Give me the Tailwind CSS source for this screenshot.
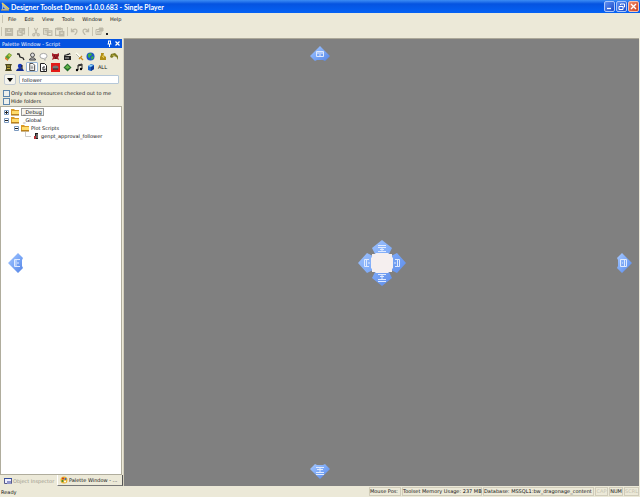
<!DOCTYPE html>
<html lang="en">
<head>
<meta charset="utf-8">
<title>Designer Toolset Demo</title>
<script src="https://cdn.jsdelivr.net/npm/@tailwindcss/browser@4"></script>
</head>
<body class="relative flex h-screen flex-col overflow-hidden bg-[#ece9d8] font-['DejaVu_Sans',Tahoma,sans-serif] text-[5px] leading-[8px] text-[#111]">
<svg class="absolute size-0" aria-hidden="true">
  <defs>
    <linearGradient id="blue" x1="0" y1="0" x2="1" y2="1"><stop offset="0" stop-color="#a9caff"/><stop offset=".5" stop-color="#7ba8f7"/><stop offset="1" stop-color="#5583e4"/></linearGradient>
    <symbol id="folder" viewBox="0 0 8 8"><path d="M0 1h3l1 1h4v5H0z" fill="#d99a25"/><path d="M1 3h7v3H1z" fill="#ffdc6b"/><path d="M0 7h8" stroke="#9a6a14"/></symbol>
    <symbol id="minus" viewBox="0 0 5 5"><path d="M.5.5h4v4h-4z" fill="#fff" stroke="#7b9ac0"/><path d="M1 2.500h3" stroke="#222"/></symbol>
    <symbol id="plus" viewBox="0 0 5 5"><path d="M.5.5h4v4h-4z" fill="#fff" stroke="#7b9ac0"/><path d="M1 2.500h3M2.500 1v3" stroke="#222"/></symbol>
  </defs>
</svg>

<header class="flex h-[13px] shrink-0 items-center bg-linear-to-b from-[#3c8cf4] via-[#0553e0] via-30% to-[#0562f5] px-px">
  <svg class="size-[9px]" viewBox="0 0 9 9"><path d="M1 1v7h7z" fill="#9ab4d0"/><path d="M1 1l7 6" stroke="#f3d24e" stroke-width="1.500"/><path d="M0 8h8" stroke="#e9b33c"/><path d="M2 5v2h2z" fill="#1b4fb0"/></svg>
  <h1 class="ml-px flex-1 whitespace-nowrap font-['Lato',sans-serif] text-[7px] font-bold text-white">Designer Toolset Demo v1.0.0.683 - Single Player</h1>
  <div class="flex gap-px">
    <button aria-label="Minimize" class="size-[11px] rounded-[2px] border border-[#a9c5fa] bg-linear-to-br from-[#5f8ff2] to-[#1c49c8]"><svg viewBox="0 0 9 9"><path d="M2 6.500h4" stroke="#fff" stroke-width="1.300"/></svg></button>
    <button aria-label="Restore" class="size-[11px] rounded-[2px] border border-[#a9c5fa] bg-linear-to-br from-[#5f8ff2] to-[#1c49c8]"><svg viewBox="0 0 9 9" fill="none" stroke="#fff"><path d="M3.500 3V2H7.500v3H6.500M2 4.500h4v3H2z"/></svg></button>
    <button aria-label="Close" class="size-[11px] rounded-[2px] border border-[#f5c1b0] bg-linear-to-br from-[#ee8a6a] to-[#d0401c]"><svg viewBox="0 0 9 9"><path d="M2 2l5 5M7 2l-5 5" stroke="#fff" stroke-width="1.400"/></svg></button>
  </div>
</header>

<nav class="flex h-[12px] shrink-0 items-center gap-[8px] pl-[2px]">
  <span class="-mr-[3px] h-[8px] w-px bg-[#c9c5b2]"></span>
  <button>File</button><button>Edit</button><button>View</button><button>Tools</button><button>Window</button><button>Help</button>
</nav>

<div class="flex h-[13px] shrink-0 items-center gap-[2px] pl-px text-[#bdb9a8]" role="toolbar">
  <span class="h-[9px] w-px bg-[#c9c5b2]"></span>
  <button aria-label="Save"><svg class="size-[10px]" viewBox="0 0 9 9" fill="none" stroke="currentColor"><path d="M1.500 1.500h6v6h-6zM3 2v2h3V2M3 7V6h3v1" stroke-width="1.400"/></svg></button>
  <button aria-label="Save all"><svg class="size-[10px]" viewBox="0 0 9 9" fill="none" stroke="currentColor"><path d="M1.500 3.500h4v4h-4zM3 3V1.500h4.500V6H6M3 5h2M5 3h2" stroke-width="1.300"/></svg></button>
  <span class="h-[9px] w-px bg-[#c9c5b2]"></span>
  <button aria-label="Cut"><svg class="size-[10px]" viewBox="0 0 9 9" fill="none" stroke="currentColor"><path d="M3 1l2.500 5M6 1L3.500 6"/><circle cx="2.500" cy="7" r="1"/><circle cx="6.500" cy="7" r="1"/></svg></button>
  <button aria-label="Copy"><svg class="size-[10px]" viewBox="0 0 9 9" fill="none" stroke="currentColor"><path d="M.5 1.500h4v5h-4zM4 3.500h4v4H4zM5 5h2M1.500 3h2M1.500 4.500h2"/></svg></button>
  <button aria-label="Paste"><svg class="size-[10px]" viewBox="0 0 9 9" fill="none" stroke="currentColor"><path d="M.5 1.500h6v6h-6z"/><path d="M2 1h3v1.500H2zM4 4h4v4H4z" fill="currentColor"/><path d="M5 5.500h2" stroke="#ece9d8"/></svg></button>
  <span class="h-[9px] w-px bg-[#c9c5b2]"></span>
  <button aria-label="Undo"><svg class="size-[9px]" viewBox="0 0 9 9" fill="none" stroke="currentColor"><path d="M1.500 1.500v3h3M2 4c2-3 5-2 5 0S5 7 5 8" stroke-width="1.300"/></svg></button>
  <button aria-label="Redo"><svg class="size-[9px]" viewBox="0 0 9 9" fill="none" stroke="currentColor"><path d="M7.500 1.500v3h-3M7 4C5 1 2 2 2 4s2 3 2 4" stroke-width="1.300"/></svg></button>
  <span class="h-[9px] w-px bg-[#c9c5b2]"></span>
  <button aria-label="Properties"><svg class="size-[9px]" viewBox="0 0 9 9" fill="none" stroke="currentColor"><path d="M1 2.500h5v5H1zM2 4.500h3M2 6h3"/><path d="M4 1h4v3H5z" fill="currentColor"/></svg></button>
  <span class="mt-[5px] size-[2px] bg-[#222]"></span>
</div>

<div class="flex min-h-0 flex-1">
  <aside class="flex w-[124px] shrink-0 flex-col border-r border-[#d4d0be]">
    <div class="mr-px mt-px flex h-[9px] shrink-0 items-center bg-[#0553e0] pl-[2px] text-white">
      <h2 class="flex-1">Palette Window - Script</h2>
      <button aria-label="Pin"><svg class="size-[7px]" viewBox="0 0 7 7" fill="none" stroke="#fff"><path d="M2.500 1v3M4.500 1v3M2 1h3M1.500 4h4M3.500 4v3"/></svg></button>
      <button aria-label="Close panel" class="mx-px"><svg class="size-[7px]" viewBox="0 0 7 7"><path d="M1.500 1.500l4 4M5.500 1.500l-4 4" stroke="#fff" stroke-width="1.200"/></svg></button>
    </div>

    <div class="mt-[3px] grid shrink-0 grid-cols-10 gap-y-px px-[3px]">
      <button aria-label="Areas" class="grid h-[10px] place-items-center"><svg class="size-[9px]" viewBox="0 0 9 9"><path d="M1 5l4-4 3 2-4 5z" fill="#5b9b33"/><path d="M1 5l3 2v2L1 7z" fill="#e07c28"/><path d="M4 3l2-1 1 2-2 1z" fill="#c9c840"/></svg></button>
      <button aria-label="Conversations" class="grid h-[10px] place-items-center"><svg class="size-[9px]" viewBox="0 0 9 9"><path d="M1 2h2l1 3 3 1 1 2" fill="none" stroke="#222" stroke-width="1.300"/></svg></button>
      <button aria-label="Characters" class="grid h-[10px] place-items-center"><svg class="size-[9px]" viewBox="0 0 9 9"><circle cx="4.500" cy="3" r="2" fill="#ddd" stroke="#555"/><path d="M1.500 8c0-3 6-3 6 0z" fill="#aaa" stroke="#444"/></svg></button>
      <button aria-label="Dialogue" class="grid h-[10px] place-items-center"><svg class="size-[9px]" viewBox="0 0 9 9"><ellipse cx="4.500" cy="4" rx="3.600" ry="2.600" fill="#fff" stroke="#a9a9a9"/><path d="M5 6.500l1 2 .5-2" fill="#fff" stroke="#999" stroke-width=".6"/></svg></button>
      <button aria-label="Creatures" class="grid h-[10px] place-items-center"><svg class="size-[9px]" viewBox="0 0 9 9"><path d="M1 1l2 1h3l2-1v3L7 5l1 3-2-1H3L1 8l1-3-1-1z" fill="#a4202a"/><path d="M3 4h1M5.500 4h1M4 6h1.500" stroke="#4a0508"/></svg></button>
      <button aria-label="Cutscenes" class="grid h-[10px] place-items-center"><svg class="size-[9px]" viewBox="0 0 9 9"><path d="M1 4h7v4H1zM1 3l6-2 .5 1.500L1.500 4z" fill="#222"/><path d="M3 2.500l1 1M5.500 1.500l1 1M2 6h4" stroke="#ddd" stroke-width=".8"/></svg></button>
      <button aria-label="Items" class="grid h-[10px] place-items-center"><svg class="size-[9px]" viewBox="0 0 9 9"><path d="M1 1l5 5" stroke="#fffdf0" stroke-width="2"/><path d="M1 2l4 4" stroke="#8c8c80" stroke-width=".6"/><path d="M4 7l3-3M6 6l2 2" stroke="#c98b1b" stroke-width="1.300"/></svg></button>
      <button aria-label="Maps" class="grid h-[10px] place-items-center"><svg class="size-[9px]" viewBox="0 0 9 9"><circle cx="4.500" cy="4.500" r="4" fill="#1d56c7"/><path d="M2 2l3-1 1 2-2 1v2L2 5zM6 4l2 1-2 3-1-2z" fill="#3bb044"/></svg></button>
      <button aria-label="Merchants" class="grid h-[10px] place-items-center"><svg class="size-[9px]" viewBox="0 0 9 9"><path d="M3 1h3L5.500 3 8 5v3H2V5l1-2z" fill="#b18e16"/><path d="M4 4l2 2M5 3l1 2" stroke="#f0d459" stroke-width=".8"/></svg></button>
      <button aria-label="Placeables" class="grid h-[10px] place-items-center"><svg class="size-[9px]" viewBox="0 0 9 9"><path d="M0 5l1-3 4-1 3 3v4L6.500 5 4 4 2 6z" fill="#7d7a22"/><path d="M2 3l3 1" stroke="#c6bb4a" stroke-width=".8"/></svg></button>
      <button aria-label="Plots" class="grid h-[10px] place-items-center"><svg class="size-[9px]" viewBox="0 0 9 9"><path d="M1 1h7L7 3v3l1 2H1l1-2V3z" fill="#4a471d"/><path d="M3 3h3M3 5.500h3" stroke="#c6ae3e"/></svg></button>
      <button aria-label="Players" class="grid h-[10px] place-items-center"><svg class="size-[9px]" viewBox="0 0 9 9"><circle cx="4" cy="3" r="2.200" fill="#1535ba"/><path d="M0 8c1-4 7-4 8 0z" fill="#132c91"/><path d="M6 2v4" stroke="#111"/></svg></button>
      <button aria-label="Scripts" class="grid h-[10px] place-items-center rounded-[1px] border border-[#98b5d6] bg-white"><svg class="size-[8px]" viewBox="0 0 9 9"><path d="M2 .5h3.500l2 2v6H2z" fill="#fff" stroke="#333"/><path d="M3 3.500h3M3 5h3M3 6.500h3" stroke="#777" stroke-width=".8"/></svg></button>
      <button aria-label="Script plots" class="grid h-[10px] place-items-center"><svg class="size-[9px]" viewBox="0 0 9 9"><path d="M1.500.5h4l2 2v6h-6z" fill="#fff" stroke="#222"/><path d="M6 4H4v3h2V5.500" fill="none" stroke="#222"/></svg></button>
      <button aria-label="Stages" class="grid h-[10px] place-items-center"><svg class="size-[9px]" viewBox="0 0 9 9"><path d="M0 0h9v9H0z" fill="#e31b18"/><ellipse cx="4.500" cy="4.500" rx="3" ry="2" fill="#777"/><path d="M2 6h5" stroke="#222"/></svg></button>
      <button aria-label="Triggers" class="grid h-[10px] place-items-center"><svg class="size-[9px]" viewBox="0 0 9 9"><path d="M4.500.5l4 4-4 4-4-4z" fill="#246e2b"/><path d="M4.500 2l2.500 2.500L4.500 6 2 4.500z" fill="#62b548"/></svg></button>
      <button aria-label="Sounds" class="grid h-[10px] place-items-center"><svg class="size-[9px]" viewBox="0 0 9 9"><path d="M3 7V2l4-1v5M3 3l4-1" fill="none" stroke="#222"/><circle cx="2" cy="7" r="1.200"/><circle cx="6" cy="6" r="1.200"/></svg></button>
      <button aria-label="Models" class="grid h-[10px] place-items-center"><svg class="size-[9px]" viewBox="0 0 9 9"><path d="M2 3l3-2 3 1v4L5 8 2 7z" fill="#1b63c7"/><path d="M2 3l3-1.500 2 1L5 4z" fill="#8fd2fa"/><path d="M5 4v4l3-2V3z" fill="#123a90"/></svg></button>
      <button class="grid h-[10px] place-items-center">ALL</button>
    </div>

    <div class="mt-[2px] flex shrink-0 items-center gap-[3px] px-[4px]">
      <button aria-label="Filter options" class="grid h-[11px] w-[12px] place-items-center rounded-[2px] border border-[#c4cbd2] bg-[#f6f5ee]"><svg class="h-[4px] w-[6px]" viewBox="0 0 6 4"><path d="M0 0h6L3 4z"/></svg></button>
      <input aria-label="Filter" value="follower" class="h-[9px] min-w-0 flex-1 rounded-[1px] border border-[#b6c8d8] bg-white px-[2px]">
    </div>

    <label class="mt-[4px] flex h-[8px] shrink-0 items-center gap-px pl-[3px] whitespace-nowrap"><input type="checkbox" class="size-[7px] appearance-none border border-[#5d86ad] bg-[#eef0ec]">Only show resources checked out to me</label>
    <label class="flex h-[8px] shrink-0 items-center gap-px pl-[3px]"><input type="checkbox" class="size-[7px] appearance-none border border-[#5d86ad] bg-[#eef0ec]">Hide folders</label>

    <ul class="mr-px mt-px min-h-0 flex-1 border border-[#b0ad9d] bg-white pl-[3px] pt-px">
      <li class="flex h-[8px] items-center gap-[2px]"><svg class="size-[5px]"><use href="#plus"/></svg><svg class="size-[8px]"><use href="#folder"/></svg><span class="border border-[#999] bg-[#f6f5f0] px-px leading-[6px]">_Debug</span></li>
      <li class="flex h-[8px] items-center gap-[2px]"><svg class="size-[5px]"><use href="#minus"/></svg><svg class="size-[8px]"><use href="#folder"/></svg><span class="pl-[2px]">_Global</span></li>
      <li class="flex h-[8px] items-center gap-[2px] pl-[10px]"><svg class="size-[5px]"><use href="#minus"/></svg><svg class="size-[8px]"><use href="#folder"/></svg><span>Plot Scripts</span></li>
      <li class="flex h-[8px] items-center gap-[2px] pl-[21px]"><svg class="h-[8px] w-[6px]" viewBox="0 0 6 8"><path d="M.5 0v4.500H6" fill="none" stroke="#ccc"/></svg><svg class="h-[8px] w-[6px]" viewBox="0 0 6 8"><path d="M2 1h3v6H2z" fill="#222"/><path d="M1 4h2v3H1z" fill="#b62e35"/><path d="M4 2v4" stroke="#aaa"/></svg><span>genpt_approval_follower</span></li>
    </ul>

    <div class="flex h-[11px] shrink-0 pl-[4px]" role="tablist">
      <button role="tab" class="flex w-[53px] items-center gap-px whitespace-nowrap text-[#98968b]"><svg class="size-[8px]" viewBox="0 0 8 8"><path d="M.5 1.500h7v5h-7z" fill="#eef" stroke="#555a8d"/><path d="M0 1.500h8" stroke="#344e9e"/><path d="M3 4h4v3H3z" fill="#8f94ca"/></svg>Object Inspector</button>
      <button role="tab" aria-selected="true" class="flex flex-1 items-center gap-px whitespace-nowrap border-x border-b border-l-white border-r-[#555] border-b-[#777] pl-[2px]"><svg class="size-[8px]" viewBox="0 0 8 8"><circle cx="4" cy="4" r="3.500" fill="#ecb332"/><circle cx="3" cy="2.500" r="1" fill="#c52f24"/><circle cx="5.500" cy="3" r="1" fill="#2f63c2"/><circle cx="5" cy="5.500" r="1" fill="#fff"/><circle cx="2.500" cy="5" r="1" fill="#388b36"/></svg>Palette Window - ...</button>
    </div>
  </aside>

  <main class="relative mr-px flex-1 border-t border-[#aca899] bg-[#808080]">
    <svg class="absolute left-1/2 top-1/2 size-[48px] -translate-x-1/2 -translate-y-1/2" viewBox="0 0 48 48" role="img" aria-label="Dock guide">
      <path d="M24 1l10 8-3 6 2 2 6-3 9 10-9 10-6-3-2 2 3 6-10 8-10-8 3-6-2-2-6 3L0 24l9-10 6 3 2-2-3-6z" fill="url(#blue)"/>
      <path d="M14 15h3l1-1h12l1 1h3v3l1 1v10l-1 1v3h-3l-1 1H18l-1-1h-3v-3l-1-1V19l1-1z" fill="#f5efef"/>
      <path d="M20 6.500h8M20 8.500h8M24 8v4M22 10.500h4M20 12.500h8M20 35.500h8M24 36v4M22 37.500h4M20 40.500h8M20 42.500h8M11 20.500H6.500v7H11M8.500 20v8M37 20.500h4.500v7H37M39.500 20v8M10 24h2M36 24h2" fill="none" stroke="#dfeaff"/>
    </svg>
  </main>
</div>

<footer class="flex h-[11px] shrink-0 items-center gap-px whitespace-nowrap pr-px">
  <span class="flex-1 pl-px">Ready</span>
  <span class="w-[32px] border border-[#d0ccba] leading-[7px]">Mouse Pos:</span>
  <span class="w-[80px] border border-[#d0ccba] leading-[7px]">Toolset Memory Usage: 237 MB</span>
  <span class="w-[111px] border border-[#d0ccba] leading-[7px]">Database: MSSQL1:bw_dragonage_content</span>
  <span class="w-[13px] border border-[#d0ccba] text-center leading-[7px] text-[#c5c1af]">CAP</span>
  <span class="w-[14px] border border-[#d0ccba] text-center leading-[7px]">NUM</span>
  <span class="w-[15px] border border-[#d0ccba] text-center leading-[7px] text-[#c5c1af]">SCRL</span>
</footer>

<svg class="absolute left-1/2 top-[46px] h-[16px] w-[20px] -translate-x-1/2" viewBox="0 0 20 16" role="img" aria-label="Dock top"><path d="M10 0l10 10-5 5-2-1H7l-2 1-5-5z" fill="url(#blue)"/><path d="M6.500 5.500h7v5h-7zM6 7h8M10 8v2" fill="none" stroke="#dfeaff"/></svg>
<svg class="absolute bottom-[18px] left-1/2 h-[16px] w-[20px] -translate-x-1/2" viewBox="0 0 20 16" role="img" aria-label="Dock bottom"><path d="M10 16L0 6l5-5 2 1h6l2-1 5 5z" fill="url(#blue)"/><path d="M6 4.500h8M10 5v4M7 6.500h6M6 9.500h8M6 11.500h8" fill="none" stroke="#dfeaff"/></svg>
<svg class="absolute left-[8px] top-[252px] h-[22px] w-[16px]" viewBox="0 0 16 22" role="img" aria-label="Dock left"><path d="M0 11L10 1l5 5-1 2v6l1 2-5 5z" fill="url(#blue)"/><path d="M12 7.500H6.500v7H12M8 7v8M9 11h2" fill="none" stroke="#dfeaff"/></svg>
<svg class="absolute right-[8px] top-[252px] h-[22px] w-[16px]" viewBox="0 0 16 22" role="img" aria-label="Dock right"><path d="M16 11L6 1 1 6l1 2v6l-1 2 5 5z" fill="url(#blue)"/><path d="M4.500 7.500h6v7h-6zM8.500 7v8M6 11h1" fill="none" stroke="#dfeaff"/></svg>
</body>
</html>
